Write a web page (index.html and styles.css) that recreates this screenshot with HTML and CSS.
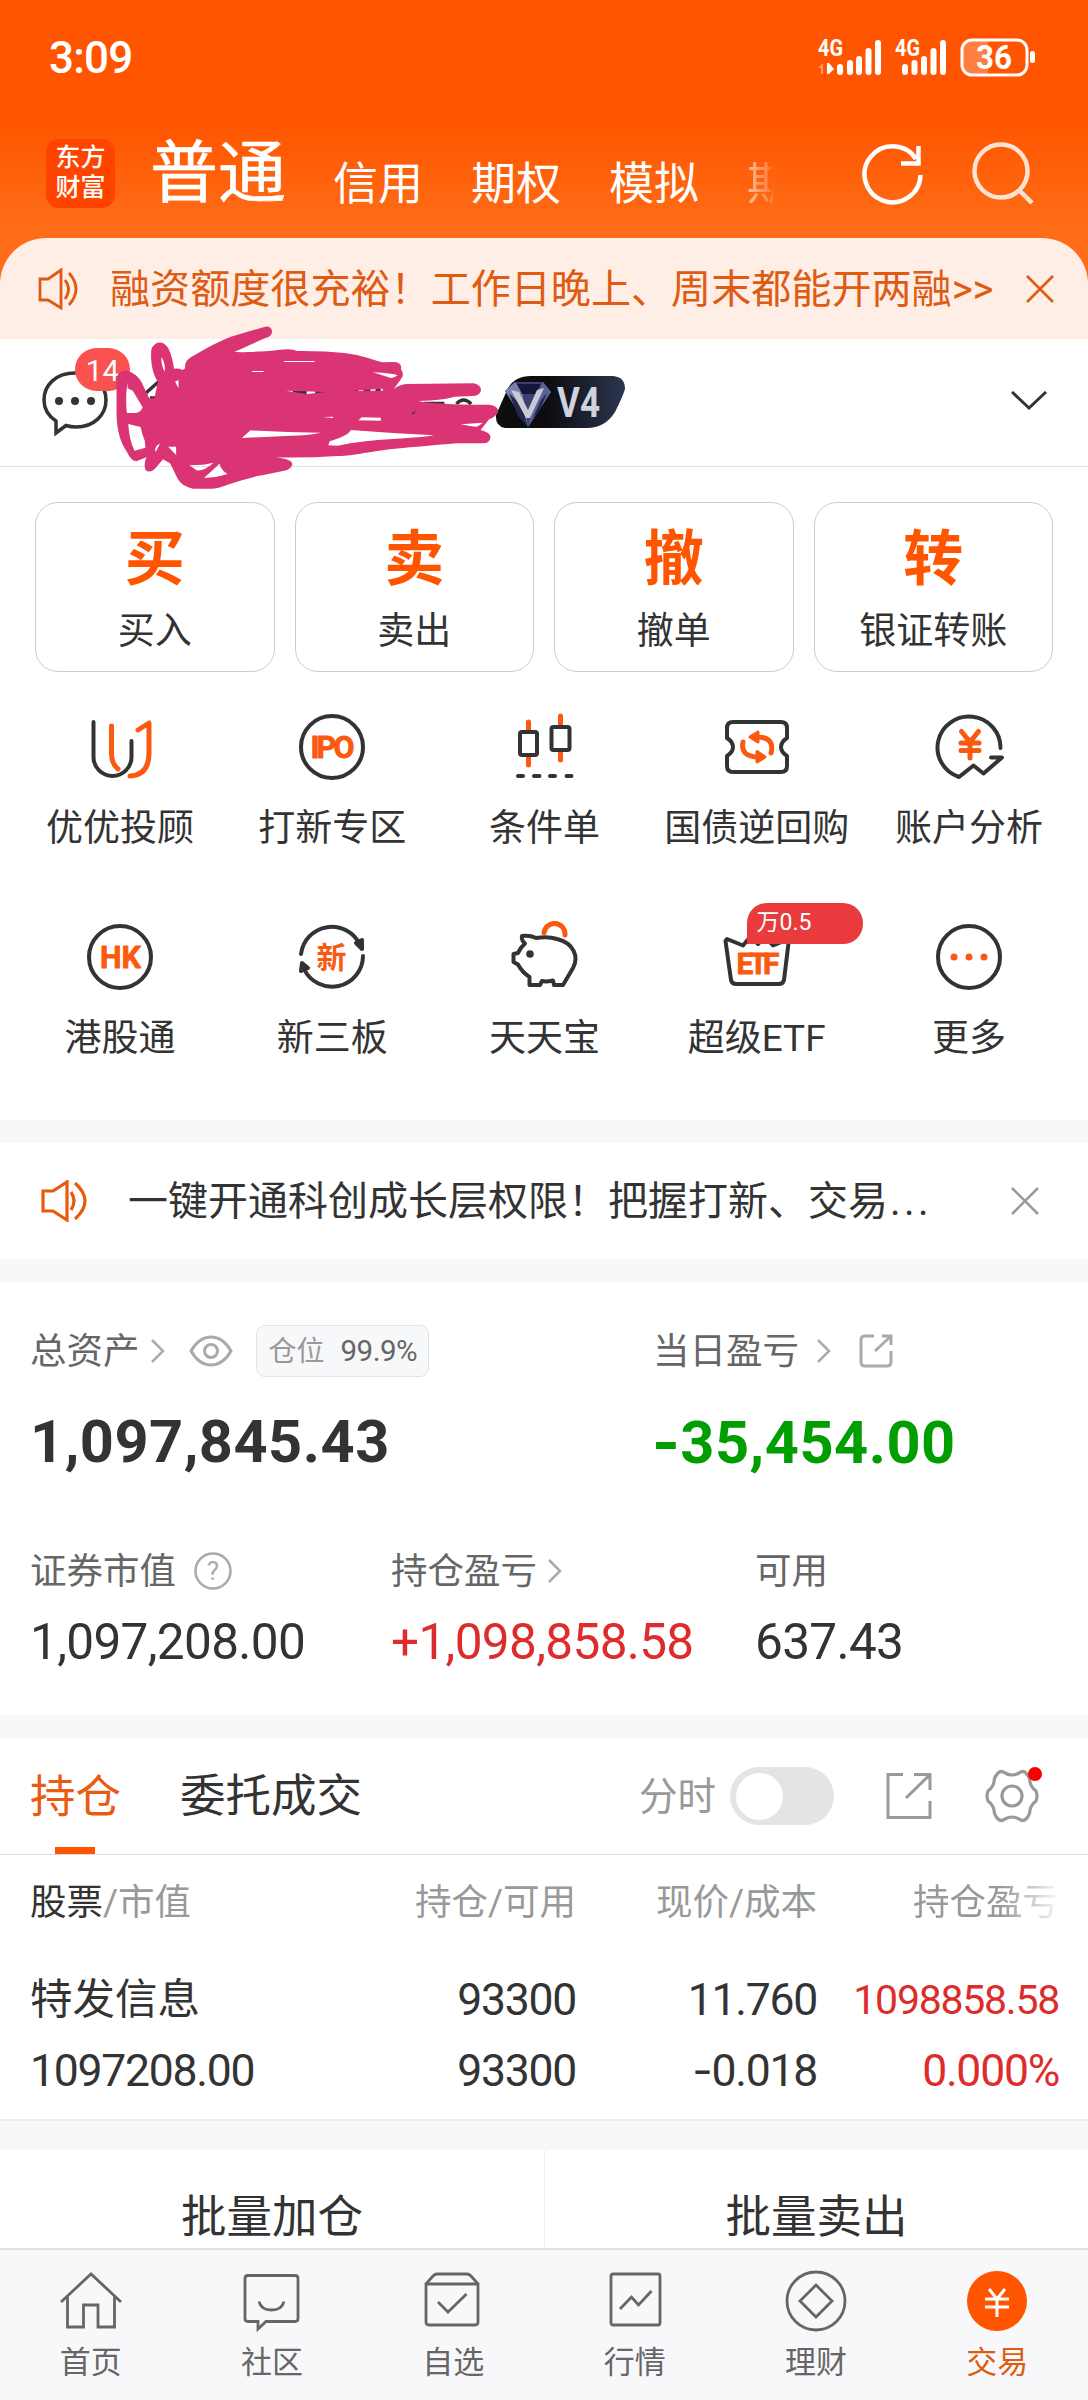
FILE: index.html
```html
<!DOCTYPE html>
<html lang="zh-CN">
<head>
<meta charset="utf-8">
<title>交易</title>
<link rel="stylesheet" href="styles.css">
</head>
<body>
<div class="screen">
  <header class="top">
    <div class="status">
      <span class="clock">3:09</span>
      <svg class="signals" width="216" height="44" viewBox="0 0 216 44">
        <g fill="#fff">
          <text class="net" x="0" y="20" textLength="25" lengthAdjust="spacingAndGlyphs">4G</text>
          <text class="net" x="77" y="20" textLength="25" lengthAdjust="spacingAndGlyphs">4G</text>
          <path d="M0 32L5 27V38H3V32Z" opacity=".4"/><path d="M9 27H11L16 33L11 38H9Z"/>
          <rect x="19" y="28" width="6" height="11" rx="3"/><rect x="29" y="24" width="6" height="15" rx="3"/><rect x="38" y="20" width="6" height="19" rx="3"/><rect x="47.500" y="12" width="6" height="27" rx="3"/><rect x="57" y="4" width="6" height="35" rx="3"/>
          <rect x="84" y="28" width="6" height="11" rx="3"/><rect x="93.500" y="24" width="6" height="15" rx="3"/><rect x="103" y="20" width="6" height="19" rx="3"/><rect x="112.500" y="12" width="6" height="27" rx="3"/><rect x="122" y="4" width="6" height="35" rx="3"/>
          <path d="M155 5H170V38H155Q145 38 145 28V15Q145 5 155 5Z" opacity=".25"/>
          <rect x="212" y="15" width="5" height="12" rx="2.500"/>
          <text class="level" x="158" y="33" textLength="36" lengthAdjust="spacingAndGlyphs">36</text>
        </g>
        <rect x="144" y="4" width="65" height="35" rx="10" fill="none" stroke="#fff" stroke-width="3"/>
      </svg>
    </div>
    <nav class="accounts">
      <span class="logo"><b>东方</b><b>财富</b></span>
      <span class="tab current">普通</span>
      <span class="tab">信用</span>
      <span class="tab">期权</span>
      <span class="tab">模拟</span>
      <span class="tab cut">期</span>
      <span class="tools">
        <svg width="64" height="64" viewBox="0 0 64 64" fill="none" stroke="#fff" stroke-width="4.500"><path d="M59.500 33A28 28 0 1 1 55 17"/><path d="M57.500 4V21.500H40"/></svg>
        <svg width="64" height="64" viewBox="0 0 64 64" fill="none" stroke="#ffe3d2" stroke-width="4.500"><circle cx="30" cy="29" r="26.500"/><path d="M48 48L61 61"/></svg>
      </span>
    </nav>
  </header>

  <div class="promo">
    <svg width="42" height="42" viewBox="0 0 42 42" fill="none" stroke="#dd5b12" stroke-width="2.800"><path d="M2 11H10L23 2V40L10 32H2Z"/><path d="M27 12Q34 21 27 31M31 5Q45 21 31 37"/></svg>
    <span class="promo-text">融资额度很充裕！工作日晚上、周末都能开两融&gt;&gt;</span>
    <svg width="28" height="28" viewBox="0 0 28 28" fill="none" stroke="#dd5b12" stroke-width="2.600"><path d="M1 1L27 27M27 1L1 27"/></svg>
  </div>

  <div class="user">
    <span class="chat">
      <svg width="68" height="66" viewBox="0 0 68 66"><path d="M15 50V62L25 54.500Q30 56 35 56C53 56 65 44 65 29S53 2 34 2S3 14 3 29Q3 42 15 50Z" fill="none" stroke="#333" stroke-width="3.500"/><g fill="#333"><circle cx="18" cy="30" r="4"/><circle cx="34" cy="30" r="4"/><circle cx="50" cy="30" r="4"/></g></svg>
      <span class="count">14</span>
    </span>
    <svg class="level-badge" width="131" height="53" viewBox="0 0 131 53">
      <defs><linearGradient id="night" x1="0" x2="1"><stop offset=".4" stop-color="#0d0d0f"/><stop offset="1" stop-color="#2c3550"/></linearGradient></defs>
      <path d="M36 0H118Q130 1 130 13Q128 20 120 36Q110 52 92 52H10Q0 50 1 39L13 12Q20 0 36 0Z" fill="url(#night)"/>
      <path d="M10 15L20 6H48L56 16L33 51Z" fill="#3b4070"/><path d="M10 15L20 6L27 15L33 51Z" fill="#7a80a8"/><path d="M48 6L56 16L33 51L42 15Z" fill="#5a6296"/><path d="M22 8H46L41 18H27Z" fill="#14173a"/><path d="M14 17L23 40L33 51L27 30ZM52 17L44 36L38 42L46 24Z" fill="#23284f"/>
      <path d="M16 14L24 16L33 34L42 14L49 12L35 42H31Z" fill="#c9cad6"/>
      <text class="rank" x="62" y="41" textLength="43" lengthAdjust="spacingAndGlyphs">V4</text>
    </svg>
    <svg class="arrow" width="36" height="20" viewBox="0 0 36 20" fill="none" stroke="#333" stroke-width="3"><path d="M1 1L18 17L35 1"/></svg>
    <svg class="scribble" width="540" height="180" viewBox="0 0 1568 540" preserveAspectRatio="none">
      <path d="M130 222L170 185M145 234H165M225 230L235 236M1035 252Q1055 228 1078 252M940 250H1000" fill="none" stroke="#333" stroke-width="10"/>
      <path fill="#333" d="M560 205H600V225H560ZM625 205H655V225H625ZM735 206H750V217H735ZM765 206H785V217H765ZM800 206H815V217H800ZM900 268H925V290H900Z"/>
      <path fill="#db3474" fill-rule="evenodd" d="M500 35Q498 50 480 54L390 96C420 98 500 93 515 90Q560 84 570 93Q650 92 710 99C760 105 800 122 820 127L855 126Q878 128 874 148Q886 165 872 180L853 207Q870 193 890 192L1085 190Q1108 195 1106 212Q1102 228 1080 228L1030 230Q1000 240 925 243C960 252 1060 255 1130 254Q1158 258 1156 275Q1150 290 1130 298L1105 330Q1135 338 1134 352Q1132 370 1112 370H1035Q900 382 850 387C800 392 720 410 690 408Q600 414 510 412Q560 418 558 434Q554 448 535 452L475 465C440 470 400 485 370 494Q340 507 320 506H270Q240 500 228 480C220 468 210 440 203 430L183 418Q165 440 158 448Q145 460 132 450Q126 430 135 412L105 424Q90 422 78 395C60 370 48 330 48 280V170Q60 150 80 152Q105 160 120 185L143 235H158L168 185C150 160 145 110 150 85Q160 65 180 68Q205 75 215 146Q230 145 240 150L247 145Q245 120 270 108Q330 70 380 50L480 20Q497 18 500 35Z
      M80 187V205L95 212L124 262Q118 278 103 279H78Q73 230 80 187Z M82 312L118 321Q122 345 130 362L132 383L100 392Q85 360 82 312Z M178 112Q190 125 188 155Q178 140 178 112Z M218 185L228 180V205Z M412 354L437 331Q540 338 640 338Q620 345 540 348Z M663 376L667 364Q725 345 728 330Q850 340 970 346Q940 352 850 357Q760 362 690 377Z M750 301L760 292L816 293L815 302Z M648 291L678 290L675 294Z M792 157Q850 160 864 166Q850 178 838 172Z M1047 313L1112 308L1095 320L1078 319Z M260 436L300 434L330 428Q300 455 280 451Z M302 474L347 431Q352 450 370 462Q340 473 302 474Z M198 380L221 380V405Z M160 395Q160 375 174 371L163 393Z M540 212L655 216L600 222Z M728 212L822 206L820 212Z M903 283L918 271L912 281Z M442 153H475V156H442Z M535 123H623V126H535Z"/>
    </svg>
  </div>

  <div class="cards">
    <div class="card"><b>买</b><span>买入</span></div>
    <div class="card"><b>卖</b><span>卖出</span></div>
    <div class="card"><b>撤</b><span>撤单</span></div>
    <div class="card"><b>转</b><span>银证转账</span></div>
  </div>

  <div class="apps">
    <div class="app"><svg class="ic" viewBox="0 0 72 72"><path d="M9.500 11V46A19 19 0 0 0 47.500 46V30"/><path class="o" d="M27.500 15V42Q27.500 53 34 58M54 19L65 12V42Q65 64 46 65"/></svg><span>优优投顾</span></div>
    <div class="app"><svg class="ic" viewBox="0 0 72 72"><circle cx="36" cy="36" r="31"/><text x="14.500" y="47" textLength="44" lengthAdjust="spacing">IPO</text></svg><span>打新专区</span></div>
    <div class="app"><svg class="ic" viewBox="0 0 72 72"><path class="o" d="M20.500 11V19M20.500 47V54M52.500 5V14M52.500 42V49"/><rect x="12" y="21" width="17" height="23" rx="2"/><rect x="43.500" y="16" width="18" height="23" rx="2"/><path d="M10 65H15M26 65H31.500M42 65H47M58.500 65H63.500"/></svg><span>条件单</span></div>
    <div class="app"><svg class="ic" viewBox="0 0 72 72"><path d="M12 11H60Q66 11 66 17V27Q60 31 60 36Q60 41 66 45V55Q66 61 60 61H12Q6 61 6 55V45Q12 41 12 36Q12 31 6 27V17Q6 11 12 11Z"/><path class="o" d="M22 31Q19 46 38 46M50 42Q54 26 36 26"/><path class="of" d="M36 40.500L44 46L36 51ZM37 21V31L29 26Z"/></svg><span>国债逆回购</span></div>
    <div class="app"><svg class="ic" viewBox="0 0 72 72"><path d="M67.500 37A31.500 31 0 1 0 26 66L40.500 54.500L50.500 62.500L69 46.500H58"/><path class="o" d="M28.500 20.500L37 31L45.500 20.500M37 31V47M28 32H46M28 39.500H46"/></svg><span>账户分析</span></div>
    <div class="app"><svg class="ic" viewBox="0 0 72 72"><circle cx="36" cy="36" r="31"/><text x="16" y="47" textLength="41" lengthAdjust="spacingAndGlyphs">HK</text></svg><span>港股通</span></div>
    <div class="app"><svg class="ic" viewBox="0 0 72 72"><path d="M5 33A31 31 0 0 1 64 24M67 35A31 31 0 0 1 8 48"/><path class="df" d="M60 22L66 19V28ZM6 42L12 47L5 50Z"/><text class="xin" x="20.500" y="47">新</text></svg><span>新三板</span></div>
    <div class="app"><svg class="ic" viewBox="0 0 72 72"><path d="M14 15Q22 14 28 17Q40 15 49 18C66 22 71 36 65 47L55 64H46L45 59.500Q38 61 34 60L32 64H21.500V56Q14 51 10 43.500L5.500 41V33L10 32Q12 27 17 22.500Q13 19 14 15Z"/><circle class="df" cx="22" cy="33" r="1.800"/><path class="o" d="M36 12A10.500 10.500 0 0 1 57 14"/></svg><span>天天宝</span></div>
    <div class="app"><svg class="ic" viewBox="0 0 72 72"><path d="M6 18L22 24.500L29 16L37 23L44 16L52 24.500L68 18L63 59Q62 63 58 63H15Q11 63 10 59L4.500 20Z"/><text class="etf" x="15.500" y="53" textLength="43" lengthAdjust="spacing">ETF</text></svg><em class="rate">万0.5</em><span>超级ETF</span></div>
    <div class="app"><svg class="ic" viewBox="0 0 72 72"><circle cx="36" cy="36" r="31"/><g class="of"><circle cx="21" cy="36" r="2"/><circle cx="36" cy="36" r="2"/><circle cx="51" cy="36" r="2"/></g></svg><span>更多</span></div>
  </div>

  <div class="notice">
    <svg width="48" height="42" viewBox="0 0 48 42" fill="none" stroke="#e8590c" stroke-width="3.200"><path d="M2 11H12L26 2V40L12 31H2Z"/><path d="M30 12Q36 21 30 30M34 3Q54 21 34 39"/></svg>
    <span class="notice-text">一键开通科创成长层权限！把握打新、交易<i>...</i></span>
    <svg width="28" height="28" viewBox="0 0 28 28" fill="none" stroke="#999" stroke-width="2.500"><path d="M1 1L27 27M27 1L1 27"/></svg>
  </div>

  <section class="assets">
    <div class="split labels">
      <div class="cell">
        <span>总资产</span>
        <svg class="chev" width="14" height="24" viewBox="0 0 14 24"><path d="M1 1L12 12L1 23"/></svg>
        <svg class="eye" width="44" height="32" viewBox="0 0 44 32"><path d="M2 16Q10 2 22 2T42 16Q34 30 22 30T2 16Z"/><circle cx="22" cy="16" r="6.500"/></svg>
        <span class="position"><i>仓位</i>99.9%</span>
      </div>
      <div class="cell">
        <span>当日盈亏</span>
        <svg class="chev far" width="14" height="24" viewBox="0 0 14 24"><path d="M1 1L12 12L1 23"/></svg>
        <svg class="share" width="34" height="36" viewBox="0 0 34 36"><path d="M15 3H6Q2 3 2 7V29Q2 33 6 33H28Q32 33 32 29V18M23 3H32V12M32 3L16 18"/></svg>
      </div>
    </div>
    <div class="split totals">
      <strong>1,097,845.43</strong>
      <strong class="down"><i class="minus">-</i>35,454.00</strong>
    </div>
    <div class="trio labels">
      <div class="cell"><span>证券市值</span>
        <svg class="help" width="40" height="40" viewBox="0 0 40 40"><circle cx="20" cy="20" r="17.500"/><text x="20" y="29" text-anchor="middle">?</text></svg></div>
      <div class="cell"><span>持仓盈亏</span><svg class="chev" width="14" height="24" viewBox="0 0 14 24"><path d="M1 1L12 12L1 23"/></svg></div>
      <div class="cell"><span>可用</span></div>
    </div>
    <div class="trio values"><span>1,097,208.00</span><span class="up">+1,098,858.58</span><span>637.43</span></div>
  </section>

  <section class="holdings">
    <div class="bar">
      <span class="view on">持仓</span>
      <span class="view">委托成交</span>
      <span class="timeline">分时</span>
      <span class="switch"></span>
      <svg class="export" width="46" height="48" viewBox="0 0 46 48"><path d="M17 2.500H2V45.500H44V29M28 2.500H44V18M44 2.500L20 26"/></svg>
      <svg class="gear" width="60" height="60" viewBox="0 0 60 60"><path d="M16 7Q19 4 23 7Q30 11 37 7Q41 4 44 7Q48 11 48 16Q49 21 54 25Q56 30 54 35Q49 39 48 44Q48 49 44 53Q41 56 37 53Q30 49 23 53Q19 56 16 53Q12 49 12 44Q11 39 6 35Q4 30 6 25Q11 21 12 16Q12 11 16 7Z"/><circle cx="30" cy="30" r="10"/><circle class="dot" cx="53" cy="8" r="7"/></svg>
    </div>
    <div class="cols head"><span><b>股票</b>/市值</span><span>持仓/可用</span><span>现价/成本</span><span class="fade">持仓盈亏</span></div>
    <div class="cols first"><span class="name">特发信息</span><span>93300</span><span>11.760</span><span class="up small">1098858.58</span></div>
    <div class="cols second"><span>1097208.00</span><span>93300</span><span><i class="minus">-</i>0.018</span><span class="up">0.000%</span></div>
  </section>

  <div class="batch"><span>批量加仓</span><span>批量卖出</span></div>

  <footer class="dock">
    <div><svg viewBox="0 0 64 64"><path d="M2 33L32 5L62 33M8.500 28V58H24.500V36H39V58H55.500V28"/></svg><span>首页</span></div>
    <div><svg viewBox="0 0 64 64"><path d="M8 6.500H55Q58 6.500 58 9.500V49.500Q58 52.500 55 52.500H26L18 60V52.500H8Q5 52.500 5 49.500V9.500Q5 6.500 8 6.500ZM19 32.500Q21 41 31.500 41T44 32.500"/></svg><span>社区</span></div>
    <div><svg viewBox="0 0 64 64"><path d="M5 15V53Q5 56 8 56H54Q57 56 57 53V15ZM5 15L12 7Q14 5 16 5H46Q48 5 50 7L57 15M17 33L27 43L45.500 25"/></svg><span>自选</span></div>
    <div><svg viewBox="0 0 64 64"><rect x="8" y="5" width="49" height="51" rx="2"/><path d="M17 40L28.500 28L35.500 36L48.500 22"/></svg><span>行情</span></div>
    <div><svg viewBox="0 0 64 64"><circle cx="32" cy="32" r="29"/><path d="M32 16L48 32L32 48L16 32Z"/></svg><span>理财</span></div>
    <div class="active"><svg viewBox="0 0 64 64"><circle cx="32" cy="32" r="30"/><path d="M24 20L32 30L40 20M32 30V48M20 30H44M20 38H44"/></svg><span>交易</span></div>
  </footer>
</div>
</body>
</html>
```
FILE: styles.css
```css
* { box-sizing: border-box; }
body { margin: 0; background: #f7f8fa; color: #333; font-family: Roboto, "Noto Sans CJK SC", sans-serif; }
i, em { font-style: normal; }
b { font-weight: inherit; }
svg { display: block; flex: none; }
.screen { width: 1088px; height: 2400px; overflow: hidden; display: flex; flex-direction: column; white-space: nowrap; position: relative; }
.screen > * { flex: none; }

/* header */
.top { height: 284px; margin-bottom: -46px; background: linear-gradient(#ff5500 120px, #ff6d18 230px); color: #fff; }
.status { height: 114px; padding: 20px 54px 0 49px; display: flex; justify-content: space-between; align-items: center; }
.clock { font-size: 44px; font-weight: 500; line-height: 60px; margin-top: -18px; letter-spacing: -0.8px; }
.signals { margin-top: -18px; overflow: visible; }
.net { font-size: 24px; font-weight: 700; }
.level { font-size: 34px; font-weight: 700; }
.accounts { height: 124px; padding: 0 53px 0 46px; display: flex; align-items: center; }
.logo { width: 69px; height: 69px; margin: -6px 37px 0 0; border-radius: 13px; background: #ff4400; display: flex; flex-direction: column; align-items: center; justify-content: center; font-size: 25px; line-height: 30px; font-weight: 500; }
.tab { font-size: 45px; line-height: 60px; margin: 18px 48px 0 0; font-weight: 400; }
.tab.current { font-size: 68px; line-height: 80px; margin: -5px 47px 0 -2px; font-weight: 400; -webkit-text-stroke: .6px #fff; }
.tab.cut { margin-right: 0; -webkit-mask-image: linear-gradient(90deg, rgba(0,0,0,.6), rgba(0,0,0,.15) 56%, transparent 60%); mask-image: linear-gradient(90deg, rgba(0,0,0,.6), rgba(0,0,0,.15) 56%, transparent 60%); }
.tools { margin: -5px 0 0 auto; display: flex; gap: 46px; }

/* promo strip */
.promo { height: 101px; padding: 0 34px 0 38px; border-radius: 46px 46px 0 0; background: #ffeee6; color: #dd5b12; display: flex; align-items: center; }
.promo-text { flex: 1; margin-left: 30px; padding-top: 2px; font-size: 40.100px; line-height: 60px; }

/* user row */
.user { height: 128px; background: #fff; border-bottom: 1px solid #e0e0e0; padding: 0 41px 0 41px; display: flex; align-items: center; position: relative; }
.chat { position: relative; margin-top: 2px; }
.count { position: absolute; left: 34px; top: -23px; width: 55px; height: 43px; border-radius: 22px; background: #fa5151; color: #fff; font-size: 30px; line-height: 45px; text-align: center; }
.level-badge { margin: -1px auto 0 386px; }
.rank { font-size: 42px; font-weight: 700; fill: #cdd3df; }
.arrow { margin-top: -3px; }
.scribble { position: absolute; left: 100px; top: -19px; z-index: 2; }

/* primary actions */
.cards { background: #fff; padding: 35px 35px 0; height: 206px; display: flex; gap: 20px; }
.card { flex: 1; height: 170px; border: 1px solid #ccc; border-radius: 23px; display: flex; flex-direction: column; align-items: center; }
.card b { font-size: 60px; line-height: 80px; font-weight: 700; color: #ff5500; margin-top: 17px; }
.card span { font-size: 37px; line-height: 50px; margin-top: 7px; }

/* app grid */
.apps { background: #fff; height: 447px; padding: 38px 13px 0 14px; display: grid; grid-template-columns: repeat(5, 1fr); grid-auto-rows: 210px; }
.app { display: flex; flex-direction: column; align-items: center; font-size: 37px; line-height: 50px; position: relative; }
.app > span { margin-top: 21px; }
.ic { width: 72px; height: 72px; fill: none; stroke: #333; stroke-width: 4; stroke-linecap: round; stroke-linejoin: round; }
.ic .o { stroke: #fa5a10; stroke-width: 5; }
.ic .of { fill: #fa5a10; stroke: #fa5a10; stroke-width: 3; }
.ic .df { fill: #333; }
.ic text { fill: #fa5a10; stroke: #fa5a10; stroke-width: .8; font-size: 30.500px; font-weight: 700; }
.ic .xin { font-size: 30px; stroke-width: 0; }
.ic .etf { font-size: 30px; }
.rate { position: absolute; left: 96px; top: -18px; width: 116px; height: 41px; padding-left: 10px; border-radius: 20px 20px 20px 0; background: #e93b3d; color: #fff; font-size: 23px; line-height: 39px; }

/* notice */
.notice { height: 116px; margin: 23px 0; padding: 0 49px 0 41px; background: #fff; display: flex; align-items: center; }
.notice-text { flex: 1; margin-left: 39px; font-size: 40px; line-height: 60px; padding-top: 2px; }
.notice-text i { letter-spacing: 3.500px; margin-left: 2px; }

/* assets */
.assets { background: #fff; height: 433px; }
.split { display: grid; grid-template-columns: 623px 1fr; padding-left: 30px; align-items: center; }
.trio { display: grid; grid-template-columns: 361px 364px 1fr; padding-left: 30px; align-items: center; }
.cell { display: flex; align-items: center; }
.cell > span:first-child { padding-top: 2px; }
.labels { height: 52px; font-size: 36.500px; line-height: 50px; color: #666; }
.split.labels { margin-top: 43px; }
.totals { height: 80px; margin-top: 24px; font-size: 59.500px; line-height: 80px; padding-left: 30px; }
.totals strong { font-weight: 700; letter-spacing: .5px; }
.minus { font-family: Inter, sans-serif; }
.down { color: #009e00; }
.totals .down { margin-left: -1px; }
.up { color: #dd2c2c; }
.chev, .eye, .share, .help { fill: none; stroke: #aaa; stroke-width: 2.500; }
.chev { margin-left: 11px; }
.chev.far { margin-left: 18px; }
.eye { margin-left: 24px; stroke-width: 3; }
.share { margin-left: 28px; stroke-width: 3; }
.help { margin-left: 17px; }
.help text { fill: #aaa; stroke: none; font-size: 26px; }
.position { margin-left: 23px; width: 173px; height: 52px; border: 1px solid #e3e4e6; border-radius: 9px; background: #f7f8fa; font-size: 29.500px; line-height: 51px; padding-left: 12px; color: #666; letter-spacing: -.5px; }
.position i { color: #999; font-size: 28px; margin-right: 16px; letter-spacing: 0; }
.trio.labels { margin-top: 64px; }
.values { height: 60px; margin-top: 15px; font-size: 49.500px; line-height: 60px; letter-spacing: -.65px; }

/* holdings */
.holdings { margin-top: 23px; background: #fff; height: 383px; border-bottom: 2px solid #ebecee; }
.bar { height: 117px; border-bottom: 1px solid #dcdcdc; padding-left: 30px; display: flex; align-items: center; }
.view { font-size: 45.500px; line-height: 60px; margin: 2px 59px 0 0; }
.view.on { color: #ea5a12; align-self: stretch; margin-top: 0; line-height: 119px; background: linear-gradient(#ff5500, #ff5500) 25px 109px / 40px 7px no-repeat; }
.timeline { font-size: 38.500px; line-height: 50px; color: #999; margin: 2px 0 0 218px; }
.switch { width: 104px; height: 58px; margin-left: 14px; border-radius: 29px; background: #e4e4e7; display: flex; align-items: center; padding-left: 6px; }
.switch::before { content: ""; width: 47px; height: 47px; border-radius: 50%; background: #fff; }
.export { margin-left: 52px; fill: none; stroke: #999; stroke-width: 3; }
.gear { margin-left: 50px; fill: none; stroke: #999; stroke-width: 3.200; }
.gear .dot { fill: #f60000; stroke: none; }
.cols { display: grid; grid-template-columns: 275px 271px 241px 242px; padding-left: 30px; align-items: center; font-size: 44.500px; line-height: 60px; letter-spacing: -1.250px; }
.cols > :nth-child(n+2) { text-align: right; }
.head { height: 60px; margin-top: 18px; font-size: 36.500px; color: #999; letter-spacing: 0; }
.head b { color: #333; }
.fade { -webkit-mask-image: linear-gradient(90deg, #000 76%, transparent 102%); mask-image: linear-gradient(90deg, #000 76%, transparent 102%); }
.first { margin-top: 37px; height: 60px; }
.second { margin-top: 10px; height: 60px; }
.name { font-size: 42.500px; letter-spacing: 0; }
.small { font-size: 41px; }

/* batch actions */
.batch { margin-top: 29px; height: 98px; background: #fff; display: grid; grid-template-columns: 1fr 1fr; text-align: center; font-size: 45.500px; line-height: 60px; }
.batch span { padding-top: 38px; }
.batch span + span { border-left: 1px solid #f0f0f2; }

/* bottom navigation */
.dock { height: 152px; background: #f8f8fa; border-top: 2px solid #e0e1e4; display: grid; grid-template-columns: repeat(6, 1fr); }
.dock div { display: flex; flex-direction: column; align-items: center; padding-top: 19px; font-size: 31px; line-height: 40px; color: #666; }
.dock svg { width: 64px; height: 64px; fill: none; stroke: #666; stroke-width: 2.800; }
.dock span { margin-top: 10px; }
.dock .active { color: #dd5b12; }
.dock .active circle { fill: #ff5500; stroke: none; }
.dock .active path { stroke: #fff; stroke-width: 3; }
```
